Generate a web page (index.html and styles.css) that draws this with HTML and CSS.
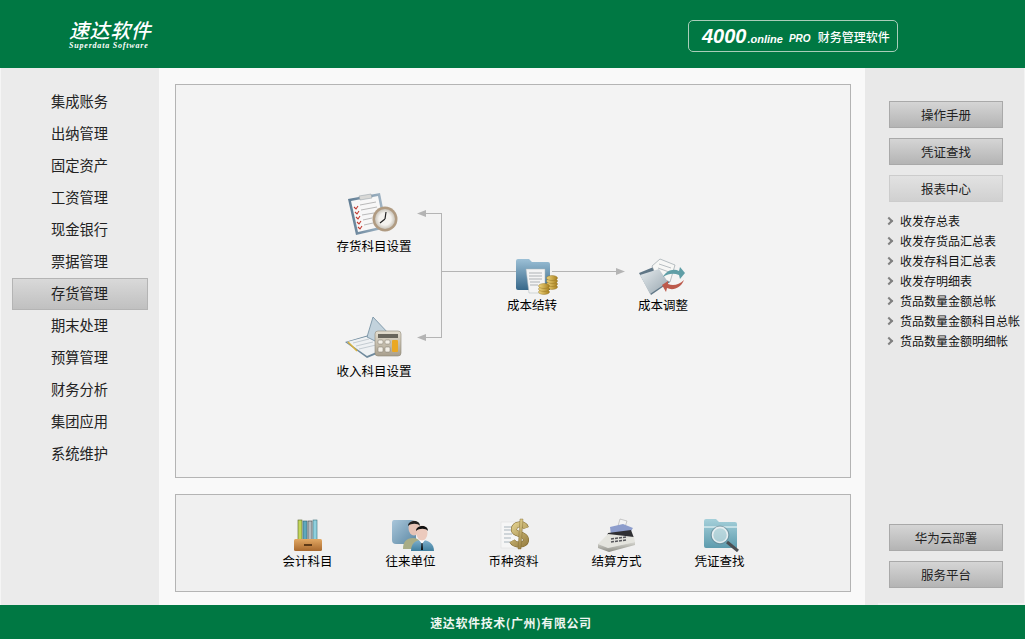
FILE: index.html
```html
<!DOCTYPE html>
<html>
<head>
  <meta charset="utf-8">
  <title>速达软件</title>
  <link rel="stylesheet" href="styles.css">
</head>
<body>
  <header class="top">
    <div class="logo">
      <div class="logo-name">速达软件</div>
      <div class="logo-sub">Superdata Software</div>
    </div>
    <div class="badge">
      <span class="badge-num">4000</span><span class="badge-online">.online</span><span class="badge-pro">PRO</span><span class="badge-text">财务管理软件</span>
    </div>
  </header>

  <div class="layout">
    <nav class="side">
      <a class="side-item">集成账务</a>
      <a class="side-item">出纳管理</a>
      <a class="side-item">固定资产</a>
      <a class="side-item">工资管理</a>
      <a class="side-item">现金银行</a>
      <a class="side-item">票据管理</a>
      <a class="side-item active">存货管理</a>
      <a class="side-item">期末处理</a>
      <a class="side-item">预算管理</a>
      <a class="side-item">财务分析</a>
      <a class="side-item">集团应用</a>
      <a class="side-item">系统维护</a>
    </nav>

    <main class="center">
      <section class="panel diagram">
        <svg class="lines" viewBox="0 0 674 392" width="674" height="392">
          <path d="M265.500 128V253M246 128.500H265.500M246 252.500H265.500M265.500 186.500H340M376 186.500H442" fill="none" stroke="#b4b4b4"/>
          <path d="M241 128.500L250 125V132Z" fill="#b4b4b4"/>
          <path d="M241 252.500L250 249V256Z" fill="#b4b4b4"/>
          <path d="M449 186.500L440 183V190Z" fill="#b4b4b4"/>
        </svg>

        <div class="node node-stock">
          <svg width="56" height="45" viewBox="0 0 56 45">
            <defs>
              <linearGradient id="board" x1="0" y1="0" x2="1" y2="0"><stop offset="0" stop-color="#5f7c93"/><stop offset="1" stop-color="#a9bccb"/></linearGradient>
              <radialGradient id="dial"><stop offset="0.6" stop-color="#f4f2ee"/><stop offset="1" stop-color="#c9c4ba"/></radialGradient>
            </defs>
            <path d="M3 7L35 1L42 36L11 43Z" fill="url(#board)"/>
            <path d="M6 9L33 4L39 34L13 40Z" fill="#f7f7f7"/>
            <path d="M14 4L26 2L27 6L15 8Z" fill="#d8d8d6" stroke="#8f9aa3" stroke-width=".5"/>
            <path d="M15 13L31 10M16 18L32 15M17 23L29 21M18 28L27 26M19 33L28 31" stroke="#b9b9b9"/>
            <path d="M9 15l2 2 2-3M10 20l2 2 2-3M11 25l2 2 2-3M12 30l2 2 2-3M13 35l2 2 2-3" fill="none" stroke="#c0392f" stroke-width="1.100"/>
            <circle cx="40" cy="27" r="12.500" fill="#b09b82"/>
            <circle cx="40" cy="27" r="10" fill="url(#dial)"/>
            <path d="M40 27L41 20M40 27L35 31" stroke="#222" stroke-width="1.200"/>
          </svg>
          <span>存货科目设置</span>
        </div>

        <div class="node node-income">
          <svg width="60" height="47" viewBox="0 0 60 47">
            <defs>
              <linearGradient id="calc" x1="0" y1="0" x2="0" y2="1"><stop offset="0" stop-color="#e4ded0"/><stop offset="1" stop-color="#a89f8c"/></linearGradient>
            </defs>
            <path d="M2 27L26 20L46 34L24 43Z" fill="#6f8a9d"/>
            <path d="M4 27L26 21L43 33L24 41Z" fill="#eef1f3"/>
            <path d="M24 22L30 2L47 20L44 32Z" fill="#c2d2dc" stroke="#6f8a9d" stroke-width=".8"/>
            <path d="M10 28L26 24M13 31L30 27M16 34L33 30" stroke="#c4ccd2"/>
            <path d="M5 27l3 3M8 30l3 3M11 33l3 3" stroke="#d9b23c" stroke-width="1.500"/>
            <rect x="32" y="16" width="26" height="25" rx="3" fill="url(#calc)" stroke="#8d8676" stroke-width=".6"/>
            <rect x="35" y="19" width="20" height="4" fill="#69665c"/>
            <rect x="35" y="25" width="5" height="4" rx="1" fill="#f3efe6" stroke="#7a7468" stroke-width=".5"/>
            <rect x="42" y="25" width="5" height="4" rx="1" fill="#f3efe6" stroke="#7a7468" stroke-width=".5"/>
            <rect x="35" y="32" width="5" height="5" rx="1" fill="#f3efe6" stroke="#7a7468" stroke-width=".5"/>
            <rect x="42" y="32" width="5" height="5" rx="1" fill="#f3efe6" stroke="#7a7468" stroke-width=".5"/>
            <rect x="49" y="25" width="6" height="12" rx="1" fill="#eaa823"/>
          </svg>
          <span>收入科目设置</span>
        </div>

        <div class="node node-cost">
          <svg class="shift-cost" width="44" height="38" viewBox="0 0 44 38">
            <defs>
              <linearGradient id="folderA" x1="0" y1="0" x2="0" y2="1"><stop offset="0" stop-color="#9cc0d6"/><stop offset="1" stop-color="#37688a"/></linearGradient>
              <linearGradient id="coin" x1="0" y1="0" x2="1" y2="0"><stop offset="0" stop-color="#f0d67e"/><stop offset="1" stop-color="#a8801f"/></linearGradient>
            </defs>
            <path d="M1 3Q1 1 3 1H14L17 4H33Q35 4 35 6V32H3Q1 32 1 30Z" fill="url(#folderA)"/>
            <path d="M11 11H30V35L14 35Z" fill="#f4f4f4" stroke="#aab4bb" stroke-width=".5"/>
            <path d="M14 15H27M14 18H27M14 21H27M15 24H25M15 27H23" stroke="#aeb2b5"/>
            <g fill="url(#coin)" stroke="#8a6a18" stroke-width=".4">
              <ellipse cx="37" cy="29" rx="5.500" ry="2.500"/><ellipse cx="37" cy="26" rx="5.500" ry="2.500"/><ellipse cx="37" cy="23" rx="5.500" ry="2.500"/><ellipse cx="37" cy="20" rx="5.500" ry="2.500"/>
              <ellipse cx="29" cy="34" rx="5.500" ry="2.500"/><ellipse cx="29" cy="31" rx="5.500" ry="2.500"/><ellipse cx="29" cy="28" rx="5.500" ry="2.500"/>
            </g>
          </svg>
          <span>成本结转</span>
        </div>

        <div class="node node-adjust">
          <svg width="48" height="38" viewBox="0 0 48 38">
            <defs>
              <linearGradient id="folderB" x1="0" y1="0" x2="1" y2="1"><stop offset="0" stop-color="#e6ebee"/><stop offset="1" stop-color="#97a6af"/></linearGradient>
            </defs>
            <path d="M1 15L18 8L32 24L13 37Z" fill="#5f7686"/>
            <path d="M14 8L22 1L37 7L32 24L18 18Z" fill="#f7f7f5" stroke="#8c979e" stroke-width=".6"/>
            <path d="M21 6L33 10M20 10L31 14" stroke="#b8bec2"/>
            <path d="M2 17L21 11L30 24L12 36Z" fill="url(#folderB)"/>
            <path d="M25 19C28 13 35 10 41 13L42 9L47 15L42 21L41 17C36 15 31 15 25 19Z" fill="#5f9ea6"/>
            <path d="M46 22C43 30 35 33 29 30L28 34L24 27L30 23L30 26C35 28 41 27 46 22Z" fill="#bc5a4c"/>
          </svg>
          <span>成本调整</span>
        </div>
      </section>

      <section class="panel tools">
        <div class="tool">
          <svg width="32" height="34" viewBox="0 0 32 34">
            <defs>
              <linearGradient id="wood" x1="0" y1="0" x2="0" y2="1"><stop offset="0" stop-color="#e2a863"/><stop offset="1" stop-color="#a9692d"/></linearGradient>
            </defs>
            <rect x="6" y="2" width="4" height="22" fill="#c3d65a" stroke="#56622a" stroke-width=".6"/>
            <rect x="11" y="3" width="4" height="21" fill="#5fa8bd" stroke="#2f6070" stroke-width=".6"/>
            <rect x="16" y="3" width="4" height="21" fill="#b4bcc2" stroke="#444" stroke-width=".6"/>
            <rect x="21" y="2" width="4" height="22" fill="#8fd0de" stroke="#39707c" stroke-width=".6"/>
            <rect x="2" y="21" width="28" height="12" rx="1.500" fill="url(#wood)"/>
            <rect x="12" y="26" width="8" height="2" fill="#5e3a17"/>
          </svg>
          <span>会计科目</span>
        </div>
        <div class="tool">
          <svg class="shift" width="44" height="34" viewBox="0 0 44 34">
            <defs>
              <linearGradient id="card" x1="0" y1="0" x2="1" y2="1"><stop offset="0" stop-color="#a9c6da"/><stop offset="1" stop-color="#5c88a4"/></linearGradient>
              <linearGradient id="suit" x1="0" y1="0" x2="0" y2="1"><stop offset="0" stop-color="#7fb0cc"/><stop offset="1" stop-color="#3f7f9f"/></linearGradient>
            </defs>
            <path d="M3 2H20Q25 2 25 6V26H5Q1 26 1 22V5Q1 2 3 2Z" fill="url(#card)"/>
            <path d="M12 31C12 24 15 20 22 20C28 20 31 24 31 31Z" fill="#a9ad86"/>
            <ellipse cx="23" cy="10" rx="5.500" ry="7.500" fill="#e6c3b6"/>
            <path d="M17 8C17 2 29 1 29 8C27 5 20 5 17 8Z" fill="#1f1f1f"/>
            <path d="M20 33C20 25 25 22 31 22C38 22 43 26 43 33Z" fill="url(#suit)"/>
            <path d="M28 22L31 26L34 22Z" fill="#fff"/>
            <path d="M30.500 25H31.500L32 32H30Z" fill="#111"/>
            <ellipse cx="31" cy="15" rx="5.500" ry="7.500" fill="#eccabd"/>
            <path d="M25 13C25 7 37 6 37 13C35 10 28 10 25 13Z" fill="#111"/>
          </svg>
          <span>往来单位</span>
        </div>
        <div class="tool">
          <svg class="shift" width="32" height="34" viewBox="0 0 32 34">
            <defs>
              <linearGradient id="gold" gradientUnits="userSpaceOnUse" x1="8" y1="4" x2="30" y2="30"><stop offset="0" stop-color="#ecdc9a"/><stop offset="1" stop-color="#8d7336"/></linearGradient>
            </defs>
            <rect x="1" y="4" width="22" height="26" fill="#f6f6f6" stroke="#dadada" stroke-width=".5"/>
            <path d="M4 9H14M4 12H13M4 16H12M4 20H11M4 24H11" stroke="#a8b4bc"/>
            <path d="M26 10C24 5 15 5 14 11C13 17 26 15 26 22C26 28 15 28 12 23" fill="none" stroke="#7a6329" stroke-width="6"/>
            <path d="M26 10C24 5 15 5 14 11C13 17 26 15 26 22C26 28 15 28 12 23" fill="none" stroke="url(#gold)" stroke-width="5"/>
            <path d="M20 1H23L21 31H18Z" fill="url(#gold)" stroke="#7a6329" stroke-width=".4"/>
          </svg>
          <span>币种资料</span>
        </div>
        <div class="tool">
          <svg width="42" height="34" viewBox="0 0 42 34">
            <defs>
              <linearGradient id="reg" x1="0" y1="0" x2="0" y2="1"><stop offset="0" stop-color="#d8d8d2"/><stop offset="1" stop-color="#8d8d86"/></linearGradient>
            </defs>
            <path d="M24 1L31 3L29 9L22 8Z" fill="#f4f4f4" stroke="#9a9a9a" stroke-width=".5"/>
            <path d="M14 9L27 6L37 10L33 16L15 17Z" fill="#8d9dcc"/>
            <path d="M12 15L35 12L38 20L10 22Z" fill="#2f2f33"/>
            <path d="M2 26L12 16L38 19L39 24L12 30Z" fill="#e4e4de"/>
            <path d="M15 21l3-.5M19 20.500l3-.5M23 20l3-.5M27 19.500l3-.5M15 24l3-.5M19 23.500l3-.5M23 23l3-.5M27 22.500l3-.5" stroke="#55555a" stroke-width="1.500"/>
            <path d="M2 26L12 30L39 24V27L13 34L2 30Z" fill="url(#reg)"/>
          </svg>
          <span>结算方式</span>
        </div>
        <div class="tool">
          <svg class="shift" width="38" height="34" viewBox="0 0 38 34">
            <defs>
              <linearGradient id="folderC" x1="0" y1="0" x2="0" y2="1"><stop offset="0" stop-color="#a5d0da"/><stop offset="1" stop-color="#5d9bad"/></linearGradient>
            </defs>
            <path d="M1 3Q1 1 3 1H13L16 4H32Q34 4 34 6V30H3Q1 30 1 28Z" fill="url(#folderC)"/>
            <path d="M1 8H34V10H1Z" fill="#c4e0e6"/>
            <circle cx="17" cy="17" r="7.500" fill="#d7e7ea" fill-opacity=".6" stroke="#e8eef0" stroke-width="1.600"/>
            <circle cx="17" cy="17" r="9" fill="none" stroke="#6a8089" stroke-width=".6"/>
            <path d="M24 24L35 33" stroke="#4b4f52" stroke-width="3"/>
          </svg>
          <span>凭证查找</span>
        </div>
      </section>
    </main>

    <aside class="right">
      <a class="btn">操作手册</a>
      <a class="btn">凭证查找</a>
      <a class="btn btn-light">报表中心</a>
      <ul class="reports">
        <li>收发存总表</li>
        <li>收发存货品汇总表</li>
        <li>收发存科目汇总表</li>
        <li>收发存明细表</li>
        <li>货品数量金额总帐</li>
        <li>货品数量金额科目总帐</li>
        <li>货品数量金额明细帐</li>
      </ul>
      <div class="right-bottom">
        <a class="btn">华为云部署</a>
        <a class="btn">服务平台</a>
      </div>
    </aside>
  </div>

  <footer class="bottom">速达软件技术(广州)有限公司</footer>
</body>
</html>
```

FILE: styles.css
```css
body {
  margin: 0;
  width: 1025px;
  height: 639px;
  overflow: hidden;
  display: flex;
  flex-direction: column;
  background-color: #f9f9f9;
  color: #111111;
  font-family: "Noto Sans CJK SC", "Liberation Sans", sans-serif;
  font-size: 12px;
}

.top {
  height: 68px;
  flex: none;
  display: flex;
  justify-content: space-between;
  align-items: flex-start;
  background-color: #007843;
  color: #ffffff;
}

.logo {
  margin: 21px 0 0 69px;
}

.logo-name {
  font-family: "Liberation Sans", "Noto Sans CJK SC", sans-serif;
  font-size: 20px;
  line-height: 20px;
  font-weight: 500;
  font-style: italic;
  letter-spacing: 0.6px;
}

.logo-sub {
  margin-top: 1px;
  font-family: "Liberation Serif", serif;
  font-size: 8px;
  line-height: 8px;
  font-weight: 700;
  font-style: italic;
  letter-spacing: 0.8px;
}

.badge {
  margin: 20px 127px 0 0;
  box-sizing: border-box;
  width: 210px;
  height: 32px;
  padding-left: 13px;
  display: flex;
  align-items: center;
  border: 1px solid #a9cdb9;
  border-radius: 5px;
}

.badge-num {
  font-family: "Liberation Sans", sans-serif;
  font-size: 20px;
  font-weight: 700;
  font-style: italic;
}

.badge-online {
  font-family: "Liberation Sans", sans-serif;
  font-size: 11px;
  font-weight: 700;
  font-style: italic;
  margin: 5px 0 0 1px;
}

.badge-pro {
  font-family: "Liberation Sans", sans-serif;
  font-size: 10px;
  font-weight: 700;
  font-style: italic;
  margin: 5px 0 0 6px;
}

.badge-text {
  font-size: 12px;
  font-weight: 500;
  margin: 0 0 0 7px;
}

.layout {
  flex: 1;
  min-height: 0;
  display: flex;
}

.side {
  width: 159px;
  flex: none;
  box-sizing: border-box;
  padding: 18px 11px 0 12px;
  background-color: #ebebeb;
  border-left: 1px solid #f5f5f5;
}

.side-item {
  display: block;
  height: 32px;
  line-height: 30px;
  margin-left: -1px;
  padding-right: 1px;
  text-align: center;
  font-size: 14.25px;
  color: #222222;
}

.side-item.active {
  box-sizing: border-box;
  border: 1px solid #b4b4b4;
  line-height: 28px;
  background: linear-gradient(#d9d9d9, #c0c0c0);
}

.center {
  flex: 1;
  min-width: 0;
  padding: 16px 14px 13px 16px;
  display: flex;
  flex-direction: column;
  gap: 16px;
}

.panel {
  box-sizing: border-box;
  border: 1px solid #b4b4b4;
}

.diagram {
  position: relative;
  height: 394px;
  background-color: #f3f3f3;
}

.lines {
  position: absolute;
  left: 0;
  top: 0;
}

.node {
  position: absolute;
  width: 90px;
  display: flex;
  flex-direction: column;
  align-items: center;
  line-height: 16px;
  font-size: 12.5px;
  color: #000000;
}

.node svg {
  display: block;
  margin-bottom: 1px;
}

.node span {
  padding-left: 2px;
}

.node-stock {
  left: 152px;
  top: 107px;
}

.node-income {
  left: 152px;
  top: 230px;
}

.node-cost {
  left: 310px;
  top: 173px;
}

.node-cost .shift-cost {
  margin-left: 12px;
}

.node-adjust {
  left: 441px;
  top: 173px;
}

.tools {
  height: 98px;
  display: flex;
  justify-content: center;
  padding: 23px 0 0 1px;
  background-color: #f0f0f0;
}

.tool {
  width: 103px;
  display: flex;
  flex-direction: column;
  align-items: center;
  line-height: 16px;
  font-size: 12.5px;
  color: #000000;
}

.tool svg {
  display: block;
  margin-bottom: 1px;
}

.tool .shift {
  margin-left: 4px;
}

.right {
  position: relative;
  width: 160px;
  flex: none;
  box-sizing: border-box;
  padding: 33px 0 17px 24px;
  display: flex;
  flex-direction: column;
  background-color: #e9e9e9;
  border-right: 1px solid #f3f3f3;
}

/* lighter strip along the bottom edge */
.right::after {
  content: "";
  position: absolute;
  left: 13px;
  right: 0;
  bottom: 0;
  height: 2px;
  background-color: #f1f1f1;
}

.btn {
  display: block;
  box-sizing: border-box;
  width: 114px;
  height: 27px;
  margin-bottom: 10px;
  line-height: 25px;
  text-align: center;
  font-size: 12.5px;
  color: #222222;
  border: 1px solid #a9a9a9;
  background: linear-gradient(#d5d5d5, #b4b4b4);
}

.btn-light {
  border-color: #cccccc;
  background: linear-gradient(#e2e2e2, #d0d0d0);
}

.reports {
  list-style: none;
  margin: -1px 0 0 0;
  padding: 0;
}

.reports li {
  position: relative;
  height: 20px;
  line-height: 20px;
  padding-left: 11px;
  white-space: nowrap;
  color: #111111;
}

.reports li::before {
  content: "";
  position: absolute;
  left: -3px;
  top: 7px;
  width: 4px;
  height: 4px;
  border-top: 2px solid #808080;
  border-right: 2px solid #808080;
  transform: rotate(45deg);
}

.right-bottom {
  margin-top: auto;
}

.right-bottom .btn:last-child {
  margin-bottom: 0;
}

.bottom {
  height: 34px;
  flex: none;
  line-height: 36px;
  text-align: center;
  font-size: 12px;
  font-weight: 700;
  letter-spacing: 0.6px;
  padding-right: 3px;
  color: #eef6f1;
  background-color: #007843;
}
```
